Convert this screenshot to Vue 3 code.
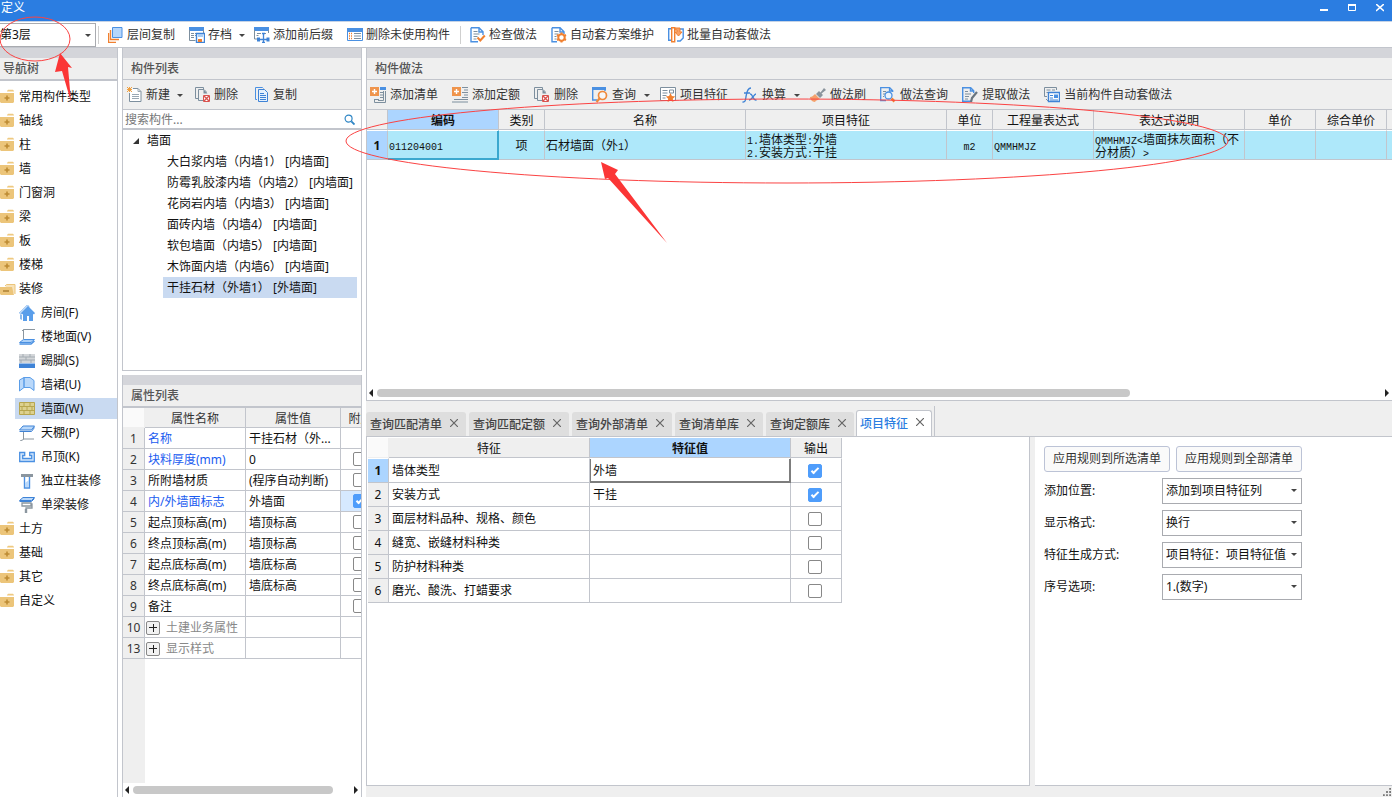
<script setup>
import { ref } from 'vue'

const floor = ref('第3层')
const search = ref('')

const mainTools = [
  { icon: 'layers', label: '层间复制' },
  { icon: 'archive', label: '存档', menu: true },
  { icon: 'affix', label: '添加前后缀' },
  { icon: 'unused', label: '删除未使用构件', divider: true },
  { icon: 'check', label: '检查做法' },
  { icon: 'plan', label: '自动套方案维护' },
  { icon: 'batch', label: '批量自动套做法' },
]
const listTools = [
  { icon: 'new', label: '新建', menu: true },
  { icon: 'delete', label: '删除' },
  { icon: 'copy', label: '复制' },
]
const methodTools = [
  { icon: 'addlist', label: '添加清单' },
  { icon: 'addquota', label: '添加定额' },
  { icon: 'delete', label: '删除' },
  { icon: 'query', label: '查询', menu: true },
  { icon: 'feature', label: '项目特征' },
  { icon: 'fx', label: '换算', menu: true },
  { icon: 'brush', label: '做法刷' },
  { icon: 'search-doc', label: '做法查询' },
  { icon: 'extract', label: '提取做法' },
  { icon: 'autoset', label: '当前构件自动套做法' },
]
const nav = [
  { label: '常用构件类型' }, { label: '轴线' }, { label: '柱' }, { label: '墙' },
  { label: '门窗洞' }, { label: '梁' }, { label: '板' }, { label: '楼梯' },
  { label: '装修', open: true },
  { label: '房间(F)', icon: 'house' },
  { label: '楼地面(V)', icon: 'floor' },
  { label: '踢脚(S)', icon: 'skirting' },
  { label: '墙裙(U)', icon: 'dado' },
  { label: '墙面(W)', icon: 'wall', active: true },
  { label: '天棚(P)', icon: 'ceiling' },
  { label: '吊顶(K)', icon: 'suspended' },
  { label: '独立柱装修', icon: 'column' },
  { label: '单梁装修', icon: 'beam' },
  { label: '土方' }, { label: '基础' }, { label: '其它' }, { label: '自定义' },
]
const components = [
  '大白浆内墙（内墙1） [内墙面]',
  '防霉乳胶漆内墙（内墙2） [内墙面]',
  '花岗岩内墙（内墙3） [内墙面]',
  '面砖内墙（内墙4） [内墙面]',
  '软包墙面（内墙5） [内墙面]',
  '木饰面内墙（内墙6） [内墙面]',
  '干挂石材（外墙1） [外墙面]',
]
const props = ref([
  { n: 1, name: '名称', value: '干挂石材（外...', blue: true },
  { n: 2, name: '块料厚度(mm)', value: '0', blue: true, on: false },
  { n: 3, name: '所附墙材质', value: '(程序自动判断)', on: false },
  { n: 4, name: '内/外墙面标志', value: '外墙面', blue: true, on: true },
  { n: 5, name: '起点顶标高(m)', value: '墙顶标高', on: false },
  { n: 6, name: '终点顶标高(m)', value: '墙顶标高', on: false },
  { n: 7, name: '起点底标高(m)', value: '墙底标高', on: false },
  { n: 8, name: '终点底标高(m)', value: '墙底标高', on: false },
  { n: 9, name: '备注', value: '', on: false },
  { n: 10, name: '土建业务属性', value: '', group: true },
  { n: 13, name: '显示样式', value: '', group: true },
])
const tabs = ['查询匹配清单', '查询匹配定额', '查询外部清单', '查询清单库', '查询定额库', '项目特征']
const activeTab = ref('项目特征')
const features = ref([
  { name: '墙体类型', value: '外墙', on: true },
  { name: '安装方式', value: '干挂', on: true },
  { name: '面层材料品种、规格、颜色', value: '', on: false },
  { name: '缝宽、嵌缝材料种类', value: '', on: false },
  { name: '防护材料种类', value: '', on: false },
  { name: '磨光、酸洗、打蜡要求', value: '', on: false },
])
const options = [
  { id: 'pos', label: '添加位置:', value: '添加到项目特征列' },
  { id: 'fmt', label: '显示格式:', value: '换行' },
  { id: 'gen', label: '特征生成方式:', value: '项目特征：项目特征值' },
  { id: 'seq', label: '序号选项:', value: '1.(数字)' },
]
</script>

<template>
  <div class="app">
    <svg class="defs" aria-hidden="true">
      <symbol id="layers" viewBox="0 0 16 16">
        <path d="M4.500 .5h9.500v10h-9.500z" fill="#b5d6fb" stroke="#4a90e2" />
        <path d="M2.500 3v9.500h8.500M.5 6v9.500h7.500" fill="none" stroke="#f08030" stroke-width="1.400" />
      </symbol>
      <symbol id="archive" viewBox="0 0 16 16">
        <path d="M0 0h15v4H0z" fill="#4a90e2" />
        <path d="M.5 3v10.500h6M14.500 3v3" fill="none" stroke="#7d8f9e" />
        <path d="M2 6.500h3M2 8.500h3M2 10.500h3M6 6.500h2M6 8.500h1" stroke="#7d8f9e" />
        <path d="M7.500 6.500h8v9h-8z" fill="#fff" stroke="#3f83d6" stroke-width="1.400" />
        <path d="M9 7h5v3H9z" fill="#a7ccf5" /><path d="M9 12h4v3H9z" fill="#f08030" />
      </symbol>
      <symbol id="affix" viewBox="0 0 16 16">
        <path d="M0 0h15v4H0z" fill="#4a90e2" />
        <path d="M.5 3v9h3M14.500 3v3M3 6.500h4M2.500 8.500h2M9 6.500h3" fill="none" stroke="#7d8f9e" />
        <path d="M3 10.500h3v4H3zM12.500 10.500h3v4h-3z" fill="#3f83d6" />
        <path d="M9.500 7v8M8 6.500h3M8 15.500h3M6 12.500h7" stroke="#3f83d6" stroke-width="1.300" />
      </symbol>
      <symbol id="unused" viewBox="0 0 16 16">
        <path d="M.5 1.500h15v12H.5z" fill="#fff" stroke="#4a90e2" />
        <path d="M0 1h16v4H0z" fill="#4a90e2" />
        <path d="M2 6.500h3M2 9h3M2 11.500h3" stroke="#f08030" stroke-dasharray="1 1" stroke-width="1.500" />
        <path d="M7 6.500h7M7 9h7M7 11.500h7" stroke="#7d8f9e" />
      </symbol>
      <symbol id="check" viewBox="0 0 16 16">
        <path d="M1 .7h8l4 4V8M1 .7v14h7M9 1v4h4" fill="none" stroke="#4a90e2" stroke-width="1.400" />
        <path d="M3.500 4.500h4M3.500 7h6M3.500 9.500h4M3.500 12h3" stroke="#7d8f9e" />
        <path d="M7.500 10.500l2.800 3 4.500-5" fill="none" stroke="#f08030" stroke-width="2" />
      </symbol>
      <symbol id="plan" viewBox="0 0 16 16">
        <path d="M1 .7h8l4 4V7M1 .7v14h5M9 1v4h4" fill="none" stroke="#4a90e2" stroke-width="1.400" />
        <path d="M3.500 4.500h4M3.500 7h4M3.500 9.500h2M3.500 12h2" stroke="#7d8f9e" />
        <circle cx="10.500" cy="10.500" r="3.200" fill="#fff" stroke="#f08030" stroke-width="2" />
        <path d="M10.500 5.500v2M10.500 13.500v2M6 8l2 1M13 12l2 1M6 13l2-1M13 9l2-1" stroke="#f08030" stroke-width="2" />
      </symbol>
      <symbol id="batch" viewBox="0 0 16 16">
        <path d="M3 1.700H.7v11.600H3M12 2h3.200v9l-3 3H9" fill="none" stroke="#4a90e2" stroke-width="1.400" />
        <path d="M3.700 .7h3v14h-3z" fill="#fff" stroke="#f08030" stroke-width="1.400" />
        <path d="M7 1h5v4h2l-3.500 4L7 5h2V3H7z" fill="#f9a064" stroke="#f08030" />
      </symbol>
      <symbol id="new" viewBox="0 0 16 16">
        <path d="M6 1.500h5l3 3v10H2.500V6" fill="#fff" stroke="#7d8f9e" />
        <path d="M11 1.500v3h3M5 7.500h7M5 9.500h7M5 11.500h7" fill="none" stroke="#9aa7b2" />
        <path d="M0 0l5 5M5 0L0 5M2.500 0v5M0 2.500h5" stroke="#f0a040" />
      </symbol>
      <symbol id="delete" viewBox="0 0 16 16">
        <path d="M3 11.500H.5v-11h8V2M11 6V4.500l-2-2H3.500v11H8" fill="none" stroke="#7d8f9e" />
        <path d="M8.500 2.500l4 4h-4z" fill="#7d8f9e" />
        <path d="M8.500 8.500h6v6h-6z" fill="#fff" stroke="#d9534f" />
        <path d="M9 9l5 5M14 9l-5 5" stroke="#d9534f" stroke-width="1.400" />
      </symbol>
      <symbol id="copy" viewBox="0 0 16 16">
        <path d="M3 12.500H1.500v-12h7l1 1" fill="none" stroke="#4a90e2" />
        <path d="M4.500 2.500h6l3 3v9h-9z" fill="#e6f1fd" stroke="#3f83d6" />
        <path d="M6 6.500h4M6 8.500h6M6 10.500h6M6 12.500h6" stroke="#3f83d6" />
      </symbol>
      <symbol id="addlist" viewBox="0 0 16 16">
        <path d="M15.500 4v11.500h-11V12M13.500 4v9.500H8" fill="none" stroke="#7d8f9e" />
        <path d="M10 0h6v3h-6z" fill="#4a90e2" /><path d="M10 5.500h3M10 8h3M10 10.500h3M5 12.500h4" stroke="#7d8f9e" />
        <path d="M0 0h9v9H0z" fill="#ef944c" /><path d="M4.500 2v5M2 4.500h5" stroke="#fff" stroke-width="1.400" />
      </symbol>
      <symbol id="addquota" viewBox="0 0 16 16">
        <path d="M10 .5h6M12 3h4M10 5.500h6M12 8h4M10 10.500h6M2 12.500h14M0 15h16" stroke="#7d8f9e" />
        <path d="M0 0h9v9H0z" fill="#ef944c" /><path d="M4.500 2v5M2 4.500h5" stroke="#fff" stroke-width="1.400" />
      </symbol>
      <symbol id="query" viewBox="0 0 16 16">
        <path d="M.7 1v12H5M13 3v1" fill="none" stroke="#4a90e2" stroke-width="1.400" /><path d="M0 0h14v3H0z" fill="#4a90e2" />
        <circle cx="10.500" cy="8.500" r="4" fill="#f7f7f7" stroke="#ef8a3c" stroke-width="1.700" />
        <path d="M7.500 11.500L4.500 15" stroke="#ef8a3c" stroke-width="2.200" />
      </symbol>
      <symbol id="feature" viewBox="0 0 16 16">
        <path d="M.5 .5h15v13H.5z" fill="#fff" stroke="#7d8f9e" />
        <path d="M2.500 3.500h5M2.500 6h5M2.500 8.500h4M2.500 11h3M9.500 3h4v3h-4z" fill="none" stroke="#7d8f9e" />
        <path d="M10.500 6l1.400 3 3.300.4-2.400 2.300.6 3.400-2.900-1.700-2.900 1.700.6-3.400-2.400-2.300 3.300-.4z" fill="#f08030" />
      </symbol>
      <symbol id="fx" viewBox="0 0 16 16">
        <path d="M.5 15c3 .5 3-2 3.500-5.500S5.500 1 9 1M2 6h6M8 7c3-.5 2.500 7 6.500 6M14 7c-2 0-4 6-7 6" fill="none" stroke="#3f83d6" stroke-width="1.400" />
      </symbol>
      <symbol id="brush" viewBox="0 0 16 16">
        <path d="M9 4l1.500 1.500L14 1l2 2-4.500 3.500L13 8l-3 3-4-4z" fill="#8a949c" />
        <path d="M5 7l5 5c-2 1-4 1-5 3-3 0-5-3-5-5 2 0 3-1 5-3z" fill="#f4a06c" />
      </symbol>
      <symbol id="search-doc" viewBox="0 0 16 16">
        <path d="M6 13.500H.7V.7h9l3 3V5M9.500 1v3h3" fill="none" stroke="#4a90e2" stroke-width="1.300" />
        <path d="M3 4.500h3M3 7h2M3 9.500h1" stroke="#7d8f9e" />
        <circle cx="8.500" cy="8.500" r="3.500" fill="#eaf3fd" stroke="#4a90e2" stroke-width="1.300" /><path d="M11.500 11.500l3 3" stroke="#f08030" stroke-width="2.500" />
      </symbol>
      <symbol id="extract" viewBox="0 0 16 16">
        <path d="M9 14.300H.7V.7h8l3 3V6M8.500 1v3h3" fill="none" stroke="#4a90e2" stroke-width="1.400" />
        <path d="M3 4.500h3M3 7h6M3 9.500h4M3 12h3" stroke="#7d8f9e" />
        <path d="M15 5l-5 6-1 4" fill="none" stroke="#69757f" stroke-width="2.200" />
      </symbol>
      <symbol id="autoset" viewBox="0 0 16 16">
        <path d="M3 9.500H.5v-9h12V3M2.500 3h4M8 3h3M2.500 5.500h2M2 12l2 2" fill="none" stroke="#7d8f9e" />
        <path d="M4.500 5.500h11v9h-11z" fill="#fff" stroke="#3f83d6" stroke-width="1.400" />
        <path d="M6 8.500h3M6 11h3M6 13h8" stroke="#3f83d6" /><path d="M10 7.500h4v3.500h-4z" fill="#4a90e2" />
      </symbol>
      <symbol id="folder" viewBox="0 0 16 16">
        <path d="M7 2l1-1.200h5L14 2v.5H7z" fill="#efc980" /><path d="M0 4h14v9L13 14H1l-1-1z" fill="#ecc57a" />
        <path d="M7 6.500v5M4.500 9h5" stroke="#bd8b33" stroke-width="1.600" />
      </symbol>
      <symbol id="folder-open" viewBox="0 0 16 16">
        <path d="M5 5l1.500-1.500H15V13" fill="#f7e3bb" stroke="#ecc57a" /><path d="M0 6h12l2 8H1L0 13z" fill="#ecc57a" />
        <path d="M3 10h6" stroke="#a97c2e" stroke-width="1.400" />
      </symbol>
      <symbol id="house" viewBox="0 0 16 16">
        <path d="M0 8l8-8 2 1v3L3 9z" fill="#c3dcf8" stroke="#8ab9ee" stroke-width=".6" />
        <path d="M9 1l7 7-1 1.500-1-.8V16h-4v-5H8v5H4V8.700L3 9.500 2 8z" fill="#5a9eea" />
        <path d="M1 9l2 1v5l-2-1z" fill="#8ab9ee" />
      </symbol>
      <symbol id="floor" viewBox="0 0 16 16">
        <path d="M4.500 10V.5H16M4.500 .5L3 2" fill="none" stroke="#8b969f" />
        <path d="M4.500 10.500h11l-3.500 3H.5z" fill="#a9cff8" stroke="#4a90e2" /><path d="M.5 15h11.500l3.500-3" fill="none" stroke="#4a90e2" stroke-width="1.400" />
      </symbol>
      <symbol id="skirting" viewBox="0 0 16 16">
        <path d="M0 1h16v9H0z" fill="#d3d6d9" /><path d="M0 4h16M0 7h16M4 1v3M11 1v3M7 4v3M2 7v3M12 7v3" stroke="#a3abb2" />
        <path d="M0 10.500h16V15H0z" fill="#3f83d6" />
      </symbol>
      <symbol id="dado" viewBox="0 0 16 16">
        <path d="M.5 3L5 .5v10L.5 14zM5 .5h6l4 3v10l-4-3H5z" fill="#b9d8fa" stroke="#5a9de8" />
      </symbol>
      <symbol id="wall" viewBox="0 0 16 16">
        <path d="M.5 1.500h15v12H.5z" fill="#ddd18f" stroke="#b7a64f" />
        <path d="M0 5.500h16M0 9.500h16M5 1v4.500M11 1v4.500M3 5.500v4M8 5.500v4M13 5.500v4M5 9.500V14M11 9.500V14" stroke="#b7a64f" />
      </symbol>
      <symbol id="ceiling" viewBox="0 0 16 16">
        <path d="M4 1h11.500l-3 4H.5z" fill="#b9d8fa" stroke="#3f83d6" /><path d="M.5 6.500h12l3-4" fill="none" stroke="#3f83d6" />
        <path d="M4.500 7v7.500L1 16M4.500 14H15" fill="none" stroke="#8b969f" />
      </symbol>
      <symbol id="suspended" viewBox="0 0 16 16">
        <path d="M.7 3.500h5v3h-2v3h9v-3h-2v-3h4.600v9H.7z" fill="#d6e8fc" stroke="#4a90e2" stroke-width="1.300" />
      </symbol>
      <symbol id="column" viewBox="0 0 16 16">
        <path d="M2 1h12v3H2z" fill="#8b969f" /><path d="M5.500 4v11h5V4" fill="#fff" stroke="#4a90e2" stroke-width="1.400" />
        <path d="M6 10l4-3v7H6z" fill="#b9d8fa" />
      </symbol>
      <symbol id="beam" viewBox="0 0 16 16">
        <path d="M4 .5h11.500l-3 3H.5z" fill="#b9d8fa" stroke="#3f83d6" /><path d="M.5 4.500h12l3-3" fill="none" stroke="#3f83d6" />
        <path d="M3 6h9v3H3zM12 7h1v4H7v3" fill="none" stroke="#8b969f" stroke-width="1.300" /><path d="M7 12v4" stroke="#8b969f" stroke-width="2.400" />
      </symbol>
    </svg>

    <header class="titlebar">
      <h1>定义</h1>
      <div class="winbtns">
        <button type="button" aria-label="最小化"><svg viewBox="0 0 8 8"><path d="M0 6h8" stroke="#fff" stroke-width="2" /></svg></button>
        <button type="button" aria-label="最大化"><svg viewBox="0 0 8 8"><path d="M.5 1h7v5.500h-7z" fill="none" stroke="#fff" /><path d="M0 1h8" stroke="#fff" stroke-width="2" /></svg></button>
        <button type="button" aria-label="关闭"><svg viewBox="0 0 8 8"><path d="M0 0l8 7M8 0L0 7" stroke="#fff" stroke-width="1.600" /></svg></button>
      </div>
    </header>

    <div class="maintools">
      <div class="select floor">
        <select v-model="floor" aria-label="楼层"><option>第3层</option></select>
      </div>
      <span class="divider"></span>
      <template v-for="t in mainTools" :key="t.label">
        <button type="button" class="tool" :class="{ menu: t.menu }">
          <svg class="icon"><use :href="'#' + t.icon" /></svg>{{ t.label }}<i v-if="t.menu" class="caret"></i>
        </button>
        <span v-if="t.divider" class="divider"></span>
      </template>
    </div>

    <main class="body">
      <nav class="nav">
        <h2 class="panel-title">导航树</h2>
        <ul>
          <li v-for="n in nav" :key="n.label" :class="{ child: n.icon, active: n.active }">
            <a href="#"><svg class="icon"><use :href="'#' + (n.icon || (n.open ? 'folder-open' : 'folder'))" /></svg>{{ n.label }}</a>
          </li>
        </ul>
      </nav>

      <div class="middle">
        <section class="panel list">
          <h2 class="panel-title">构件列表</h2>
          <div class="tools">
            <button v-for="t in listTools" :key="t.label" type="button" class="tool" :class="{ menu: t.menu }">
              <svg class="icon"><use :href="'#' + t.icon" /></svg>{{ t.label }}<i v-if="t.menu" class="caret"></i>
            </button>
          </div>
          <div class="search">
            <input v-model="search" type="text" placeholder="搜索构件..." aria-label="搜索构件" />
            <svg viewBox="0 0 12 12"><circle cx="5" cy="5" r="3.800" fill="none" stroke="#2f86c5" stroke-width="1.300" /><path d="M8 8l3.500 3.500" stroke="#2f86c5" stroke-width="2" /></svg>
          </div>
          <div class="tree">
            <div class="root"><svg viewBox="0 0 8 8"><path d="M7 1v6H1z" fill="#333" /></svg>墙面</div>
            <ul>
              <li v-for="(c, i) in components" :key="c" :class="{ active: i === 6 }">{{ c }}</li>
            </ul>
          </div>
        </section>

        <section class="panel props">
          <h2 class="panel-title">属性列表</h2>
          <div class="props-body">
            <table class="grid">
              <colgroup><col class="c22" /><col class="c101" /><col class="c95" /><col class="c40" /></colgroup>
              <thead><tr><th class="corner"></th><th>属性名称</th><th>属性值</th><th>附加</th></tr></thead>
              <tbody>
                <tr v-for="p in props" :key="p.n">
                  <th scope="row">{{ p.n }}</th>
                  <td :class="{ blue: p.blue, group: p.group }"><button v-if="p.group" type="button" class="plus" aria-label="展开"></button>{{ p.name }}</td>
                  <td>{{ p.value }}</td>
                  <td class="tick" :class="{ lit: p.on }"><input v-if="p.on !== undefined" v-model="p.on" type="checkbox" :aria-label="p.name" /></td>
                </tr>
              </tbody>
            </table>
          </div>
          <div class="scroll"><i class="left"></i><div class="track"><div class="thumb wide"></div></div><i class="right"></i></div>
        </section>
      </div>

      <div class="rightcol">
        <section class="panel method">
          <h2 class="panel-title">构件做法</h2>
          <div class="tools">
            <button v-for="t in methodTools" :key="t.label" type="button" class="tool" :class="{ menu: t.menu }">
              <svg class="icon"><use :href="'#' + t.icon" /></svg>{{ t.label }}<i v-if="t.menu" class="caret"></i>
            </button>
          </div>
          <table class="grid items">
            <colgroup>
              <col class="c21" /><col class="c111" /><col class="c46" /><col class="c201" /><col class="c201" /><col class="c46" />
              <col class="c101" /><col class="c151" /><col class="c71" /><col class="c71" /><col />
            </colgroup>
            <thead>
              <tr>
                <th></th><th class="sel">编码</th><th>类别</th><th>名称</th><th>项目特征</th><th>单位</th>
                <th>工程量表达式</th><th>表达式说明</th><th>单价</th><th>综合单价</th><th></th>
              </tr>
            </thead>
            <tbody>
              <tr>
                <th scope="row" class="sel">1</th>
                <td class="cursor"><span class="m">011204001</span></td>
                <td class="center">项</td>
                <td>石材墙面（外<span class="m">1</span>）</td>
                <td><span class="m">1.</span>墙体类型<span class="m">:</span>外墙<br /><span class="m">2.</span>安装方式<span class="m">:</span>干挂</td>
                <td class="center"><span class="m">m2</span></td>
                <td><span class="m">QMMHMJZ</span></td>
                <td><span class="m">QMMHMJZ&lt;</span>墙面抹灰面积（不<br />分材质）<span class="m">&gt;</span></td>
                <td></td><td></td><td></td>
              </tr>
            </tbody>
          </table>
          <div class="space"></div>
          <div class="scroll"><i class="left"></i><div class="track"><div class="thumb"></div></div><i class="right"></i></div>
        </section>

        <section class="detail">
          <div class="tabs" role="tablist">
            <button v-for="t in tabs" :key="t" type="button" role="tab" :aria-selected="t === activeTab" :class="{ active: t === activeTab }" @click="activeTab = t">
              {{ t }}<svg viewBox="0 0 8 8"><path d="M0 0l8 8M8 0L0 8" stroke="#666" stroke-width="1.200" /></svg>
            </button>
            <span class="tabend"></span>
          </div>
          <div class="detail-body">
            <div class="features">
              <table class="grid">
                <colgroup><col class="c21" /><col class="c201" /><col class="c201" /><col class="c51" /></colgroup>
                <thead><tr><th class="corner"></th><th>特征</th><th class="sel">特征值</th><th>输出</th></tr></thead>
                <tbody>
                  <tr v-for="(f, i) in features" :key="f.name">
                    <th scope="row" :class="{ sel: i === 0 }">{{ i + 1 }}</th>
                    <td>{{ f.name }}</td>
                    <td :class="{ cursor: i === 0 }">{{ f.value }}</td>
                    <td class="tick"><input v-model="f.on" type="checkbox" :aria-label="f.name" /></td>
                  </tr>
                </tbody>
              </table>
            </div>
            <form class="options" @submit.prevent>
              <div class="apply"><button type="button">应用规则到所选清单</button><button type="button">应用规则到全部清单</button></div>
              <div v-for="o in options" :key="o.id" class="option">
                <label :for="o.id">{{ o.label }}</label>
                <div class="select"><select :id="o.id"><option>{{ o.value }}</option></select></div>
              </div>
            </form>
          </div>
          <footer class="status"><svg viewBox="0 0 9 9"><path d="M7 0h2v2H7zM7 3.500h2v2H7zM7 7h2v2H7zM3.500 3.500h2v2h-2zM3.500 7h2v2h-2zM0 7h2v2H0z" fill="#777" /></svg></footer>
        </section>
      </div>
    </main>

    <svg class="marks" width="1392" height="300" aria-hidden="true">
      <g fill="none" stroke="#fb4343"><ellipse cx="35" cy="39" rx="35" ry="22" /><ellipse cx="787" cy="141" rx="441" ry="42" /></g>
      <g fill="#fb3636"><path d="M60 53l12 15-4-1 3 35-9-31-7 1z" /><path d="M601 162l17 8-3 4 52 69-59-65-3 1z" /></g>
    </svg>
  </div>
</template>

<style>
html, body { margin: 0; }
</style>

<style scoped>
.app {
  --line: #c2c5cc;
  position: relative;
  display: flex;
  flex-direction: column;
  height: 100vh;
  overflow: hidden;
  background: #fff;
  color: #111;
  font: 12px/16px "Noto Sans", "Noto Sans CJK SC", sans-serif;
}
.app *, .app *::after, .app *::before { box-sizing: border-box; }
.defs { position: absolute; width: 0; height: 0; }
.marks { position: absolute; top: 0; left: 0; pointer-events: none; }
button, input, select { font: inherit; color: inherit; margin: 0; padding: 0; border: 0; background: none; border-radius: 0; }
h1, h2, ul { margin: 0; padding: 0; list-style: none; font: inherit; }
.icon { width: 16px; height: 16px; flex: none; }

.titlebar { display: flex; justify-content: space-between; height: 22px; flex: none; padding: 0 8px 0 1px; background: #2b7de1; border-bottom: 1px solid #c5d3e6; color: #fff; }
.winbtns { display: flex; gap: 20px; padding-top: 4px; }
.winbtns button { width: 8px; height: 8px; display: flex; }
.winbtns svg { width: 8px; height: 8px; }

.maintools { display: flex; align-items: center; height: 26px; flex: none; border-bottom: 1px solid var(--line); }
.divider { width: 1px; height: 18px; background: #cfcfcf; margin: 0 9px 0 -4px; }
.tool { display: flex; align-items: center; gap: 4px; padding-right: 4px; color: #333; white-space: nowrap; }
.maintools .tool { margin-right: 9px; gap: 3px; padding-right: 5px; }
.tools .menu, .maintools .menu { padding-right: 0; }
.floor + .divider { margin-left: 2px; }
.caret { width: 10px; height: 4px; margin: 2px 0 0 0; display: flex; justify-content: flex-end; }
.caret::after { content: ""; border: 3px solid transparent; border-top-color: #444; border-bottom: 0; }

.select { position: relative; border: 1px solid #a9abb0; height: 26px; background: #fff; }
.select select { appearance: none; width: 100%; height: 100%; padding-left: 3px; outline: 0; }
.select::after { content: ""; position: absolute; right: 4px; top: 10px; border: 3px solid transparent; border-top-color: #444; border-bottom: 0; pointer-events: none; }
.floor { width: 96px; height: 24px; border-left: 0; }
.floor select { padding-left: 0; }

.body { flex: 1; min-height: 0; display: grid; grid-template-columns: 118px 240px minmax(0, 1fr); column-gap: 4px; }
.panel-title { flex: none; height: 32px; padding: 3px 8px 0; border-top: 10px solid #d4d5da; border-bottom: 1px solid var(--line); background: #efefef; color: #555; font-weight: 500; }
.nav { border-right: 1px solid var(--line); display: flex; flex-direction: column; min-height: 0; }
.nav .panel-title { padding-left: 3px; border-bottom-width: 2px; height: 33px; }
.nav ul { padding-top: 5px; }
.nav a { display: flex; align-items: center; gap: 3px; height: 21px; color: inherit; text-decoration: none; white-space: nowrap; }
.nav li { padding: 0 0 3px; }
.nav .child a { margin-left: 15px; padding-left: 4px; gap: 6px; }
.nav .active a { background: #c9daf1; }

.middle { display: flex; flex-direction: column; gap: 4px; min-height: 0; }
.panel { display: flex; flex-direction: column; min-height: 0; min-width: 0; border-left: 1px solid var(--line); }
.middle .panel { border-right: 1px solid var(--line); }
.list { flex: 322 1 0; border-bottom: 1px solid var(--line); }
.props { flex: 422 1 0; }
.tools { display: flex; align-items: center; gap: 10px; height: 30px; flex: none; padding-left: 3px; background: #efefef; border-bottom: 1px solid var(--line); }
.list .tools { gap: 12px; padding-left: 4px; }
.list .tool { gap: 3px; }
.search { display: flex; align-items: center; height: 20px; flex: none; padding: 0 6px 0 2px; border-bottom: 2px solid var(--line); }
.search input { flex: 1; min-width: 0; height: 18px; outline: 0; }
.search input::placeholder { color: #777; }
.search svg { width: 11px; height: 11px; }
.tree { white-space: nowrap; }
.root { display: flex; align-items: center; gap: 7px; height: 21px; padding-left: 9px; }
.root svg { width: 8px; height: 8px; }
.tree li { height: 21px; line-height: 21px; margin: 0 4px 0 40px; padding-left: 4px; }
.tree .active { background: #c9daf1; }

.grid { border-collapse: separate; border-spacing: 0; table-layout: fixed; width: 0; }
.grid th, .grid td { padding: 1px 0 0 3px; border-right: 1px solid var(--line); border-bottom: 1px solid var(--line); text-align: left; white-space: nowrap; overflow: hidden; }
.grid th { padding: 1px 0 0; text-align: center; font-weight: 400; background: #efefef; }
.grid thead th { height: 20px; padding-top: 2px; }
.c21 { width: 21px; } .c22 { width: 22px; } .c40 { width: 40px; } .c46 { width: 46px; } .c51 { width: 51px; } .c71 { width: 71px; }
.c95 { width: 95px; } .c101 { width: 101px; } .c111 { width: 111px; } .c151 { width: 151px; } .c201 { width: 201px; }
.grid th.sel { background: #acd5ff; font-weight: 700; }
.grid .corner { background: #fafafa; border-color: #efefef; }
.grid td.tick { padding: 0 2px 0 0; text-align: center; font-size: 0; line-height: 14px; }
.tick input { appearance: none; width: 14px; height: 14px; border: 1px solid #888; border-radius: 2px; background: #fff; vertical-align: middle; position: relative; }
.tick input:checked { background: #4f9dfb; border-color: #4f9dfb; }
.tick input:checked::after { content: ""; position: absolute; left: 4px; top: 1px; width: 4px; height: 8px; border: solid #fff; border-width: 0 2px 2px 0; transform: rotate(45deg); }

.props-body { flex: 1; min-height: 0; overflow: hidden; background: linear-gradient(90deg, #efefef 22px, #fff 22px); border-top: 1px solid var(--line); }
.props .grid thead th { color: #333; }
.props .grid tbody tr { height: 21px; }
.props tbody th { color: #333; }
.blue { color: #1a5cf0; }
.grid td.group { color: #888; padding-left: 1px; }
.plus { width: 14px; height: 14px; margin-right: 6px; vertical-align: -2px; border: 1px solid #888; border-radius: 2px; background: linear-gradient(#222, #222) center/8px 1px no-repeat, linear-gradient(#222, #222) center/1px 8px no-repeat, #f2f2f2; background-origin: border-box; }
.lit { background: #d6e9ff; }

.scroll { display: flex; align-items: center; gap: 4px; height: 14px; flex: none; padding: 0 3px 0 2px; }
.scroll i { border: 4px solid transparent; }
.scroll .left { border-left: 0; border-right-color: #222; }
.scroll .right { border-right: 0; border-left-color: #222; }
.track { flex: 1; }
.thumb { width: 75%; height: 8px; border-radius: 4px; background: #c8c8c8; }
.thumb.wide { width: 92%; }

.rightcol { display: flex; flex-direction: column; min-height: 0; min-width: 0; }
.method { flex: 352 1 0; border-bottom: 1px solid var(--line); overflow: hidden; }
.space { flex: 1; }
.grid.items { width: 100%; }
.items td, .items tbody th { border-top: 1px solid #fff; }
.items td { background: #aee8fa; padding: 1px 0 0 1px; line-height: 13px; }
.items tbody tr { height: 30px; }
.items tr > :last-child { border-right: 0; }
.items td.center { text-align: center; padding: 1px 0 0; }
.items .cursor { box-shadow: inset -1px -1px #3ba8cf; border-color: #fff #3ba8cf #3ba8cf #fff; }
.m { font-family: "Liberation Mono", monospace; font-size: 10px; line-height: 1px; }

.detail { flex: 396 1 0; display: flex; flex-direction: column; min-height: 0; background: #efefef; }
.tabs { display: flex; align-items: flex-end; gap: 3px; height: 35px; flex: none; }
.tabs button { display: flex; align-items: center; gap: 8px; height: 24px; padding: 2px 8px 0 4px; background: #dedede; border-radius: 3px 3px 0 0; color: #444; font-weight: 500; white-space: nowrap; }
.tabs svg { width: 8px; height: 8px; margin-bottom: 4px; }
.tabs .active { height: 26px; margin-left: -1px; padding: 0 7px 0 3px; background: #fff; border: 1px solid var(--line); border-bottom: 0; color: #2b7de1; }
.tabend { width: 1px; height: 30px; margin-left: -1px; background: var(--line); }
.detail-body { flex: 1; min-height: 0; display: grid; grid-template-columns: minmax(0, 664fr) minmax(0, 357fr); column-gap: 5px; border-top: 1px solid var(--line); }
.features { border: 1px solid var(--line); border-top-width: 0; background: #fff; padding: 1px 0 0 1px; overflow: hidden; }
.features tbody tr { height: 24px; }
.features tbody tr:first-child { height: 25px; }
.features tbody tr:first-child > * { border-top: 1px solid #fff; }
.features .cursor { box-shadow: inset 1px 0 #7d7d7d, inset -1px -1px #7d7d7d; border-right-color: #7d7d7d; border-bottom-color: #7d7d7d; }
.options { background: #fff; padding: 9px; display: flex; flex-direction: column; gap: 6px; border-bottom: 1px solid var(--line); }
.apply { display: flex; gap: 6px; }
.apply button { width: 126px; height: 26px; border: 1px solid #bcc3d6; border-radius: 3px; background: #fafafa; color: #333; white-space: nowrap; }
.option { display: grid; grid-template-columns: 118px 140px; align-items: center; }
.status { height: 11px; flex: none; display: flex; justify-content: flex-end; align-items: flex-end; padding: 0 1px 1px; }
.status svg { width: 8px; height: 8px; }
</style>
